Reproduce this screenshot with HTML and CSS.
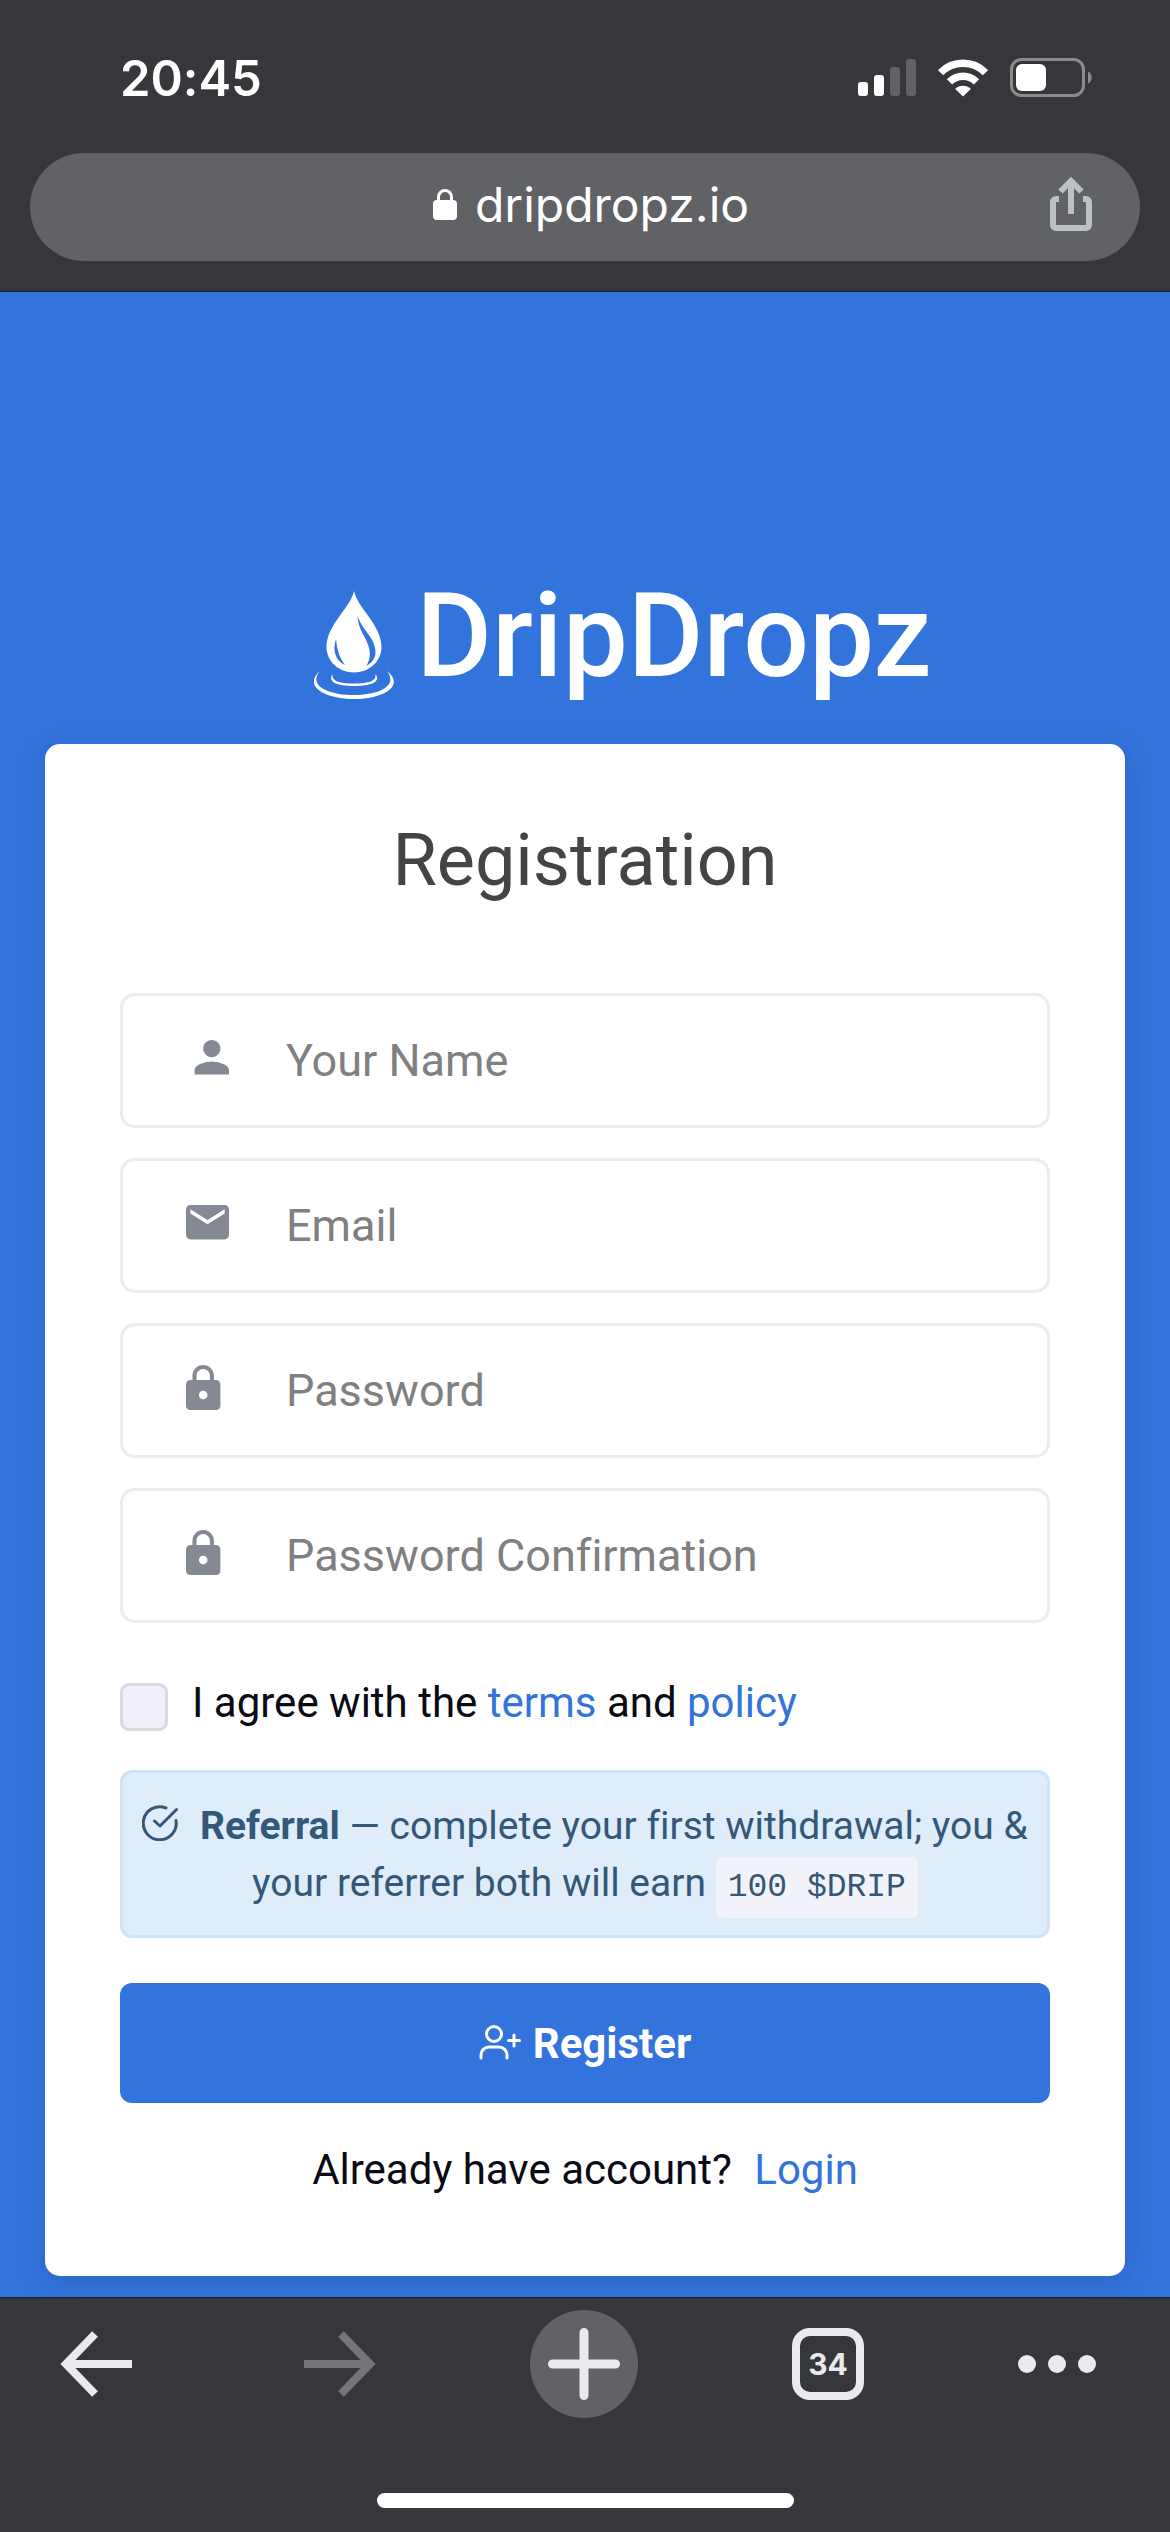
FILE: index.html
```html
<!DOCTYPE html>
<html lang="en">
<head>
    <meta charset="UTF-8">
    <meta name="viewport" content="width=device-width, initial-scale=1.0">
    <title>DripDropz | Registration</title>
    <link rel="stylesheet" href="styles.css">
</head>
<body>

<header class="browser-top">
    <div class="status-bar">
        <span class="clock">20:45</span>
        <div class="status-icons">
            <svg class="signal" viewBox="0 0 58 38" fill="#fff">
                <rect x="0" y="23" width="10" height="14" rx="3"/>
                <rect x="16" y="16" width="10" height="21" rx="3"/>
                <rect x="32" y="8" width="10" height="29" rx="3" fill="#616264"/>
                <rect x="48" y="0" width="10" height="37" rx="3" fill="#616264"/>
            </svg>
            <svg class="wifi" viewBox="0 0 50 38" fill="none" stroke="#fff" stroke-width="7.5">
                <path d="M2.6 13.7a31.5 31.5 0 0 1 44.8 0"/>
                <path d="M11.5 22.8a19 19 0 0 1 27 0"/>
                <path d="M25 37.5l-7.8-7.6a11 11 0 0 1 15.6 0z" fill="#fff" stroke="none"/>
            </svg>
            <svg class="battery" viewBox="0 0 82 40">
                <rect x="1.5" y="1.5" width="72" height="36" rx="10" fill="none" stroke="#8a8b8d" stroke-width="3"/>
                <rect x="6" y="6" width="30" height="27" rx="6" fill="#fff"/>
                <path d="M78 13.500c5 2 5 10 0 12z" fill="#8a8b8d"/>
            </svg>
        </div>
    </div>
    <div class="address-bar">
        <div class="address">
            <svg class="address-lock" viewBox="0 0 24 31">
                <rect x="0" y="11" width="24" height="20" rx="4" fill="#fff"/>
                <path d="M5.500 13V8a6.500 6.500 0 0 1 13 0v5" fill="none" stroke="#fff" stroke-width="3"/>
            </svg>
            <span>dripdropz.io</span>
        </div>
        <button class="share" type="button" aria-label="Share">
            <svg viewBox="0 0 42 54" fill="none" stroke="#bdc1c6" stroke-width="6">
                <path d="M9 22H6a3 3 0 0 0-3 3v23a3 3 0 0 0 3 3h30a3 3 0 0 0 3-3V25a3 3 0 0 0-3-3h-3"/>
                <path d="M21 37V5"/>
                <path d="M10.500 14.500L21 4l10.500 10.500"/>
            </svg>
        </button>
    </div>
</header>

<main class="page">
    <div class="logo">
        <svg class="logo-drop" viewBox="0 0 80 108">
            <path d="M40 0c3 16 27.500 34 27.500 56 0 14-12 25.500-27.500 25.500S12.500 70 12.500 56C12.500 34 37 16 40 0z" fill="#fff"/>
            <path d="M43.500 24c3 14 18 22 18 37 0 6-3 10-9 14 3-6 4-10 3-16-2-12-12-20-12-35z" fill="#3273dc"/>
            <path d="M22 48c1 10 3 18 9 26-9-4-13-14-9-26z" fill="#3273dc"/>
            <path d="M6 80c-17 14 3 28 34 28s51-14 33-28c11 14-6 24-33 24S-6 94 6 80z" fill="#fff"/>
            <path d="M18.500 83c-5 8 4 12 21.500 12s27-4 21.500-12c1 7-6 9.500-21.500 9.500S17.500 90 18.500 83z" fill="#fff"/>
        </svg>
        <span>DripDropz</span>
    </div>

    <form class="card">
        <h1>Registration</h1>

        <div class="fields">
            <label class="field">
                <svg viewBox="0 4 20 16"><path d="M12 12c2.210 0 4-1.790 4-4s-1.790-4-4-4-4 1.790-4 4 1.790 4 4 4zm0 2c-2.670 0-8 1.340-8 4v2h16v-2c0-2.660-5.330-4-8-4z"/></svg>
                <input type="text" placeholder="Your Name" aria-label="Your Name">
            </label>
            <label class="field">
                <svg viewBox="2 4 20 16"><path d="M20 4H4c-1.100 0-2 .9-2 2v12c0 1.100.9 2 2 2h16c1.100 0 2-.9 2-2V6c0-1.100-.9-2-2-2zm0 4l-8 5-8-5V6l8 5 8-5v2z"/></svg>
                <input type="email" placeholder="Email" aria-label="Email">
            </label>
            <label class="field">
                <svg viewBox="4 1 20 21"><path d="M18 8h-1V6c0-2.760-2.240-5-5-5S7 3.240 7 6v2H6c-1.100 0-2 .9-2 2v10c0 1.100.9 2 2 2h12c1.100 0 2-.9 2-2V10c0-1.100-.9-2-2-2zm-6 9c-1.100 0-2-.9-2-2s.9-2 2-2 2 .9 2 2-.9 2-2 2zm3.100-9H8.900V6c0-1.710 1.390-3.100 3.100-3.100s3.100 1.390 3.100 3.100v2z"/></svg>
                <input type="password" placeholder="Password" aria-label="Password">
            </label>
            <label class="field">
                <svg viewBox="4 1 20 21"><path d="M18 8h-1V6c0-2.760-2.240-5-5-5S7 3.240 7 6v2H6c-1.100 0-2 .9-2 2v10c0 1.100.9 2 2 2h12c1.100 0 2-.9 2-2V10c0-1.100-.9-2-2-2zm-6 9c-1.100 0-2-.9-2-2s.9-2 2-2 2 .9 2 2-.9 2-2 2zm3.100-9H8.900V6c0-1.710 1.390-3.100 3.100-3.100s3.100 1.390 3.100 3.100v2z"/></svg>
                <input type="password" placeholder="Password Confirmation" aria-label="Password Confirmation">
            </label>
        </div>

        <div class="agree">
            <input type="checkbox" id="agree">
            <label for="agree">I agree with the <a href="#">terms</a> and <a href="#">policy</a></label>
        </div>

        <p class="referral">
            <svg viewBox="0 0 36 36" fill="none" stroke="currentColor" stroke-width="3" stroke-linecap="round" stroke-linejoin="round">
                <path d="M34 15.500A16.500 16.500 0 1 1 24 3"/>
                <path d="M34.500 4.500L18 21l-5.500-5"/>
            </svg>
            <strong>Referral</strong> — complete your first withdrawal; you &amp; your referrer both will earn <code>100 $DRIP</code>
        </p>

        <button class="register-btn" type="submit">
            <svg viewBox="0 0 42 42" fill="none" stroke="#fff" stroke-width="3" stroke-linecap="round">
                <circle cx="15" cy="12" r="7.500"/>
                <path d="M2 36v-3a8 8 0 0 1 8-8h10a8 8 0 0 1 8 8v3"/>
                <path d="M35 13v11M29.500 18.500h11"/>
            </svg>
            Register
        </button>

        <p class="login">Already have account? <a href="#">Login</a></p>
    </form>
</main>

<nav class="browser-bottom">
    <div class="toolbar">
        <button type="button" aria-label="Back">
            <svg class="arrow" viewBox="0 0 72 66" fill="none" stroke="#e8eaed" stroke-width="8">
                <path d="M72 33H8"/>
                <path d="M35 3L6 33l29 30"/>
            </svg>
        </button>
        <button type="button" aria-label="Forward">
            <svg class="arrow" viewBox="0 0 72 66" fill="none" stroke="#747577" stroke-width="8">
                <path d="M0 33h64"/>
                <path d="M37 3l29 30-29 30"/>
            </svg>
        </button>
        <button class="new-tab" type="button" aria-label="New tab">
            <svg viewBox="0 0 72 72" stroke="#e8eaed" stroke-width="9" stroke-linecap="round">
                <path d="M36 4.500v63M4.500 36h63"/>
            </svg>
        </button>
        <button type="button" aria-label="Open tabs"><span class="tab-count">34</span></button>
        <button class="more" type="button" aria-label="More">
            <svg viewBox="0 0 78 18" fill="#e8eaed">
                <circle cx="9" cy="9" r="9"/>
                <circle cx="39" cy="9" r="9"/>
                <circle cx="69" cy="9" r="9"/>
            </svg>
        </button>
    </div>
    <div class="home-bar"></div>
</nav>

</body>
</html>
```
FILE: styles.css
```css
* { margin: 0; padding: 0; box-sizing: border-box; }
body { display: flex; flex-direction: column; min-height: 100vh; background: #3273dc; color: #0a0a14; font-family: Roboto, sans-serif; font-size: 42px; font-variant-ligatures: none; }
svg { display: block; flex: none; }
a { color: #3273dc; text-decoration: none; }
button { border: none; background: none; cursor: pointer; font: inherit; }

/* browser chrome */
.browser-top { background: #36373a; color: #fff; padding: 48px 30px 30px; border-bottom: 1px solid #0f1d33; font-family: Inter, sans-serif; }
.status-bar { display: flex; align-items: center; justify-content: space-between; height: 60px; padding: 0 48px 0 90px; }
.clock { font-size: 49px; font-weight: 600; }
.status-icons { display: flex; align-items: center; gap: 22px; }
.signal { width: 58px; height: 38px; }
.wifi { width: 50px; height: 38px; }
.battery { width: 82px; height: 40px; }
.address-bar { display: grid; grid-template-columns: 1fr auto 1fr; align-items: center; height: 108px; margin-top: 45px; padding: 0 48px 6px 60px; border-radius: 54px; background: #606266; }
.address { grid-column: 2; display: flex; align-items: center; gap: 18px; font-size: 48px; }
.address-lock { width: 24px; height: 31px; }
.share { justify-self: end; }
.share svg { width: 42px; height: 54px; }

/* page */
.page { flex: 1; padding: 270px 45px 20px; }
.logo { display: flex; align-items: center; justify-content: center; gap: 22px; height: 148px; padding-left: 76px; color: #fff; font-size: 116px; font-weight: 500; }
.logo-drop { width: 80px; height: 108px; margin-top: 18px; }
.card { margin-top: 34px; padding: 72px 75px 76px; border-radius: 15px; background: #fff; box-shadow: 0 6px 30px rgba(0,0,0,0.12); }
h1 { color: #444; font-size: 72px; font-weight: 400; line-height: 90px; text-align: center; }

.fields { display: grid; gap: 30px; margin-top: 87px; }
.field { display: flex; align-items: center; gap: 57px; height: 135px; padding: 0 63px; border: 3px solid #ebecf4; border-radius: 15px; }
.field svg { width: 43px; fill: #858993; margin-bottom: 6px; }
.field input { flex: 1; min-width: 0; border: none; outline: none; background: none; color: #0a0a14; font: 45px Roboto, sans-serif; font-variant-ligatures: none; }
.field input::placeholder { color: #808080; }

.agree { display: flex; align-items: center; gap: 24px; margin-top: 50px; line-height: 60px; }
.agree input { appearance: none; width: 48px; height: 48px; margin-top: 8px; border: 3px solid #d8dae2; border-radius: 9px; background: #f0f0fa; }

.referral { margin-top: 37px; padding: 25px 15px 23px; border: 3px solid #cfe4f4; border-radius: 12px; background: #deedf9; color: #34587a; font-size: 39px; line-height: 57px; text-align: center; }
.referral svg { display: inline-block; width: 36px; height: 36px; margin-right: 12px; vertical-align: -2px; }
.referral code { padding: 12px; border-radius: 6px; background: #f2f3f8; font: 33px "Liberation Mono", monospace; }

.register-btn { display: flex; align-items: center; justify-content: center; gap: 12px; width: 100%; height: 120px; margin-top: 45px; border-radius: 12px; background: #3273dc; color: #fff; font-size: 42px; font-weight: 700; }
.register-btn svg { width: 42px; height: 42px; }
.login { margin-top: 37px; line-height: 60px; text-align: center; }
.login a { margin-left: 12px; }

.browser-bottom { display: flex; flex-direction: column; justify-content: space-between; align-items: center; height: 235px; padding: 12px 0 24px; border-top: 1px solid #0f1d33; background: #36373a; font-family: Inter, sans-serif; }
.toolbar { display: grid; grid-template-columns: repeat(4, 1fr) 78px; align-items: center; width: 100%; padding: 0 74px 0 42px; }
.toolbar button { display: flex; align-items: center; justify-content: center; width: 108px; height: 108px; }
.toolbar .more { width: 78px; }
.arrow { width: 72px; height: 66px; }
.new-tab { border-radius: 50%; background: #606266; }
.new-tab svg { width: 72px; height: 72px; }
.tab-count { display: flex; align-items: center; justify-content: center; width: 72px; height: 72px; border: 8px solid #e8eaed; border-radius: 18px; color: #e8eaed; font-size: 30px; font-weight: 700; }
.more svg { width: 78px; height: 18px; }
.home-bar { width: 417px; height: 15px; border-radius: 8px; background: #fff; }
```
